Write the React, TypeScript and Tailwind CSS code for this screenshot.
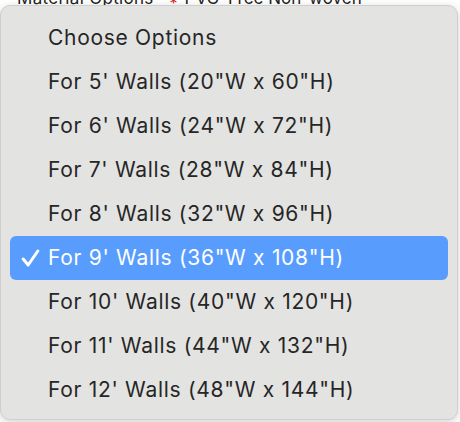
import React from "react";

const options = [
  "Choose Options",
  "For 5' Walls (20\"W x 60\"H)",
  "For 6' Walls (24\"W x 72\"H)",
  "For 7' Walls (28\"W x 84\"H)",
  "For 8' Walls (32\"W x 96\"H)",
  "For 9' Walls (36\"W x 108\"H)",
  "For 10' Walls (40\"W x 120\"H)",
  "For 11' Walls (44\"W x 132\"H)",
  "For 12' Walls (48\"W x 144\"H)",
];

const selected = 5;

export default function App() {
  return (
    <div className="relative w-[460px] h-[422px] overflow-hidden bg-white font-['Inter','Liberation_Sans',sans-serif]">
      {/* page content behind the popup */}
      <div className="flex items-baseline pl-[17px] -mt-[12px] text-[17px] leading-[20px] text-[#222]">
        <span className="tracking-[0.3px]">Material Options</span>
        <span className="ml-[16px] text-[#e02020] text-[16px] relative top-[5px]">*</span>
        <span className="ml-[7px]">PVC</span>
        <span className="ml-[9px]">Free Non-woven</span>
      </div>

      <div className="absolute left-0 top-[5px] w-[458px] h-[415px] rounded-[10px] bg-[#e3e3e2] border border-[#cfcfcf] shadow-[0_2px_8px_rgba(0,0,0,0.18)] pt-[10px] px-[9px]">
        <ul className="flex flex-col">
          {options.map((opt, i) => {
            const active = i === selected;
            return (
              <li
                key={opt}
                className={
                  active
                    ? "flex items-center h-[44px] rounded-[6px] bg-[#589dfd] text-white"
                    : "flex items-center h-[44px] text-[#262626]"
                }
              >
                <span className="w-[38px] flex justify-center pl-[2px]">
                  {active && (
                    <svg width="19" height="18" viewBox="0 0 19 18" fill="none">
                      <path
                        d="M2.2 10 L7.2 16 L16.8 2"
                        stroke="white"
                        strokeWidth="3"
                        strokeLinecap="round"
                        strokeLinejoin="round"
                      />
                    </svg>
                  )}
                </span>
                <span className="text-[21px] tracking-[0.7px]">{opt}</span>
              </li>
            );
          })}
        </ul>
      </div>
    </div>
  );
}
